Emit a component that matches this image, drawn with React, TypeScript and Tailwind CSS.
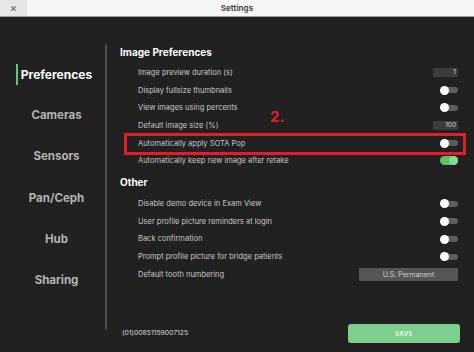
const Toggle = ({ on = false }: { on?: boolean }) => {
  if (on) {
    return (
      <div className="relative w-[18px] h-[9px] rounded-full bg-[#5cc26c]">
        <div className="absolute right-0 top-0 w-[9px] h-[9px] rounded-full bg-[#86dc94]" />
      </div>
    );
  }
  return (
    <div className="relative w-[18px] h-[9px] flex items-center">
      <div className="absolute left-[4px] right-0 h-[6px] rounded-full bg-[#5e5e5e]" />
      <div className="absolute left-0 w-[9px] h-[9px] rounded-full bg-white" />
    </div>
  );
};

const NumBox = ({ value }: { value: string }) => (
  <div className="w-[25px] h-[9px] bg-[#3c3c3c] text-[6.5px] leading-[9px] text-right pr-[2px] text-[#d0d0d0]">
    {value}
  </div>
);

const Row = ({ label, children }: { label: string; children: React.ReactNode }) => (
  <div className="h-[17.6px] flex items-center justify-between pl-[18px]">
    <span className="text-[7.5px] text-[#c8c8c8]">{label}</span>
    {children}
  </div>
);

const navItems = ["Cameras", "Sensors", "Pan/Ceph", "Hub", "Sharing"];

export default function App() {
  return (
    <div
      className="w-[474px] h-[352px] bg-[#212121] flex flex-col overflow-hidden"
      style={{ fontFamily: "Inter, 'Noto Sans', sans-serif" }}
    >
      <div className="h-[17px] shrink-0 bg-[#f6f6f6] border-b border-[#9a9a9a] flex items-center relative">
        <div className="w-[27px] h-full bg-[#e6e6e6] flex items-center justify-center text-[#555] text-[11px]">
          ×
        </div>
        <div className="absolute inset-0 flex items-center justify-center text-[8px] font-bold text-[#4a4a4a]">
          Settings
        </div>
      </div>

      <div className="flex-1 flex relative">
        <div className="w-[105px] pt-[37px] flex flex-col">
          <div className="h-[41.2px] relative flex items-center justify-center text-[12px] font-bold text-white pl-[8px]">
            <div className="absolute left-[16px] top-[10px] w-[2px] h-[21px] bg-[#63c474]" />
            Preferences
          </div>
          {navItems.map((n) => (
            <div
              key={n}
              className="h-[41.2px] flex items-center justify-center text-[11.5px] font-bold text-[#b4b4b4] pl-[8px]"
            >
              {n}
            </div>
          ))}
        </div>

        <div className="w-[2px] mt-[27px] mb-[22px] bg-[#4c4c4c] rounded-full" />

        <div className="flex-1 flex flex-col pl-[13px] pt-[28px]">
          <div className="pr-[16px]">
            <div className="h-[14px] flex items-center text-[10px] font-bold text-white mb-[5px]">
              Image Preferences
            </div>
            <Row label="Image preview duration (s)">
              <NumBox value="1" />
            </Row>
            <Row label="Display fullsize thumbnails">
              <Toggle />
            </Row>
            <Row label="View images using percents">
              <Toggle />
            </Row>
            <Row label="Default image size (%)">
              <NumBox value="100" />
            </Row>
            <Row label="Automatically apply SOTA Pop">
              <Toggle />
            </Row>
            <Row label="Automatically keep new image after retake">
              <Toggle on />
            </Row>

            <div className="h-[14px] flex items-center text-[10px] font-bold text-white mt-[6px] mb-[5.5px]">
              Other
            </div>
            <Row label="Disable demo device in Exam View">
              <Toggle />
            </Row>
            <Row label="User profile picture reminders at login">
              <Toggle />
            </Row>
            <Row label="Back confirmation">
              <Toggle />
            </Row>
            <Row label="Prompt profile picture for bridge patients">
              <Toggle />
            </Row>
            <Row label="Default tooth numbering">
              <div className="w-[99px] h-[13px] bg-[#565656] text-[7px] leading-[13px] text-center text-[#cfcfcf]">
                U.S. Permanent
              </div>
            </Row>
          </div>

          <div className="mt-auto mb-[9px] pl-[2px] pr-[14px] flex items-center justify-between">
            <span className="text-[6.8px] text-[#dcdcdc]">(01)00851159007125</span>
            <div className="w-[112px] h-[19px] rounded-[3px] bg-[#7dcf8e] flex items-center justify-center text-[6px] font-bold tracking-[0.5px] text-[#eaf7ec]">
              SAVE
            </div>
          </div>
        </div>

        <div className="absolute left-[124px] top-[116px] w-[342px] h-[22px] border-[3px] border-[#e11d25]" />
        <div className="absolute left-[270px] top-[92px] text-[15px] font-bold text-[#dc2028] leading-none">
          2.
        </div>
      </div>
    </div>
  );
}
